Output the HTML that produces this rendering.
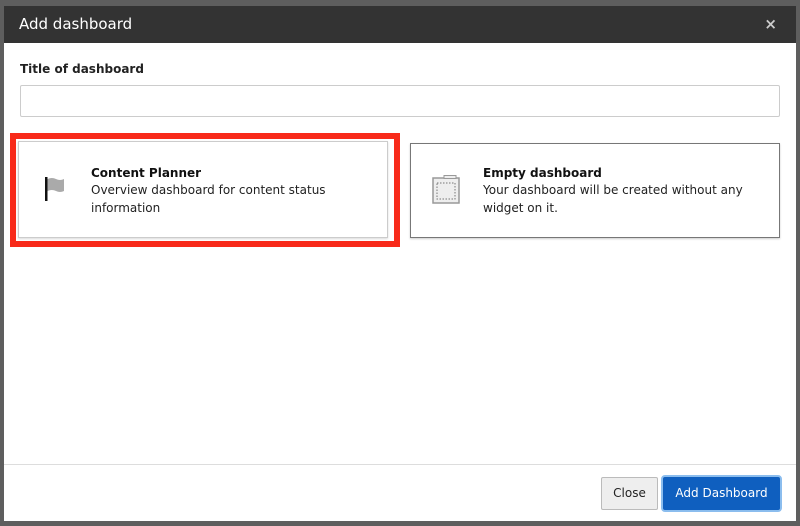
<!DOCTYPE html>
<html><head><style>
body{margin:0;width:800px;height:526px;background:#5e5e5e;position:relative;overflow:hidden;font-family:"DejaVu Sans","Liberation Sans",sans-serif;}
.modal{position:absolute;left:4px;top:6px;width:792px;height:515px;background:#fff;}
.hdr{position:absolute;left:0;top:0;width:792px;height:37px;background:#333;color:#fff;}
.hdr .t{position:absolute;left:15px;top:9px;font-size:15px;}
.hdr .x{position:absolute;right:19px;top:9px;font-size:15px;color:#ccc;font-weight:bold;}
.lbl{position:absolute;left:16px;top:56px;font-size:12px;font-weight:bold;color:#222;}
.inp{position:absolute;left:16px;top:79px;width:758px;height:30px;border:1px solid #ccc;border-radius:2px;}
.card{position:absolute;background:#fff;box-sizing:border-box;}
.c1{left:6px;top:127px;width:390px;height:114px;border:6px solid #f82a1a;}
.c1i{left:2px;top:2px;width:370px;height:97px;border:1px solid #ccc;position:absolute;background:#fff;box-sizing:border-box;box-shadow:0 1px 2px rgba(0,0,0,.15);}
.c2{left:406px;top:137px;width:370px;height:95px;border:1px solid #777;box-shadow:0 1px 2px rgba(0,0,0,.2);}
.tt{position:absolute;font-size:12px;font-weight:bold;color:#111;}
.d{position:absolute;font-size:12px;color:#222;line-height:18px;}
.foot{position:absolute;left:0;top:458px;width:792px;border-top:1px solid #ddd;}
.btn{position:absolute;font-size:12px;box-sizing:border-box;text-align:center;}
.close{left:601px;top:477px;width:57px;height:33px;background:#eee;border:1px solid #bbb;line-height:31px;color:#222;border-radius:2px;}
.add{left:661px;top:475px;width:121px;height:37px;background:#0f5fbf;border:2px solid #8bbdee;border-radius:4px;color:#fff;line-height:33px;}
</style></head><body>
<div class="modal">
<div class="hdr"><span class="t">Add dashboard</span><span class="x">×</span></div>
<div class="lbl">Title of dashboard</div>
<div class="inp"></div>
<div class="card c1"><div class="c1i">
<svg style="position:absolute;left:24px;top:34px" width="24" height="26"><rect x="2" y="1" width="2.5" height="24" fill="#111"/><path d="M4.5 3 Q9 1 13 3 T21 3 V15 Q17 17 13 15 T4.5 15Z" fill="#aaa"/></svg>
<div class="tt" style="left:72px;top:24px">Content Planner</div>
<div class="d" style="left:72px;top:39px">Overview dashboard for content status<br>information</div>
</div></div>
<div class="card c2">
<svg style="position:absolute;left:21px;top:31px" width="30" height="30"><rect x="1" y="3" width="26" height="25" fill="#eee" stroke="#999" stroke-width="1.5"/><rect x="12" y="0.5" width="12" height="3" fill="#eee" stroke="#999"/><rect x="5" y="8" width="18" height="16" fill="none" stroke="#777" stroke-dasharray="1.5 1.5"/></svg>
<div class="tt" style="left:72px;top:22px">Empty dashboard</div>
<div class="d" style="left:72px;top:37px">Your dashboard will be created without any<br>widget on it.</div>
</div>
<div class="foot"></div>
</div>
<div class="btn close">Close</div>
<div class="btn add">Add Dashboard</div>
</body></html>
